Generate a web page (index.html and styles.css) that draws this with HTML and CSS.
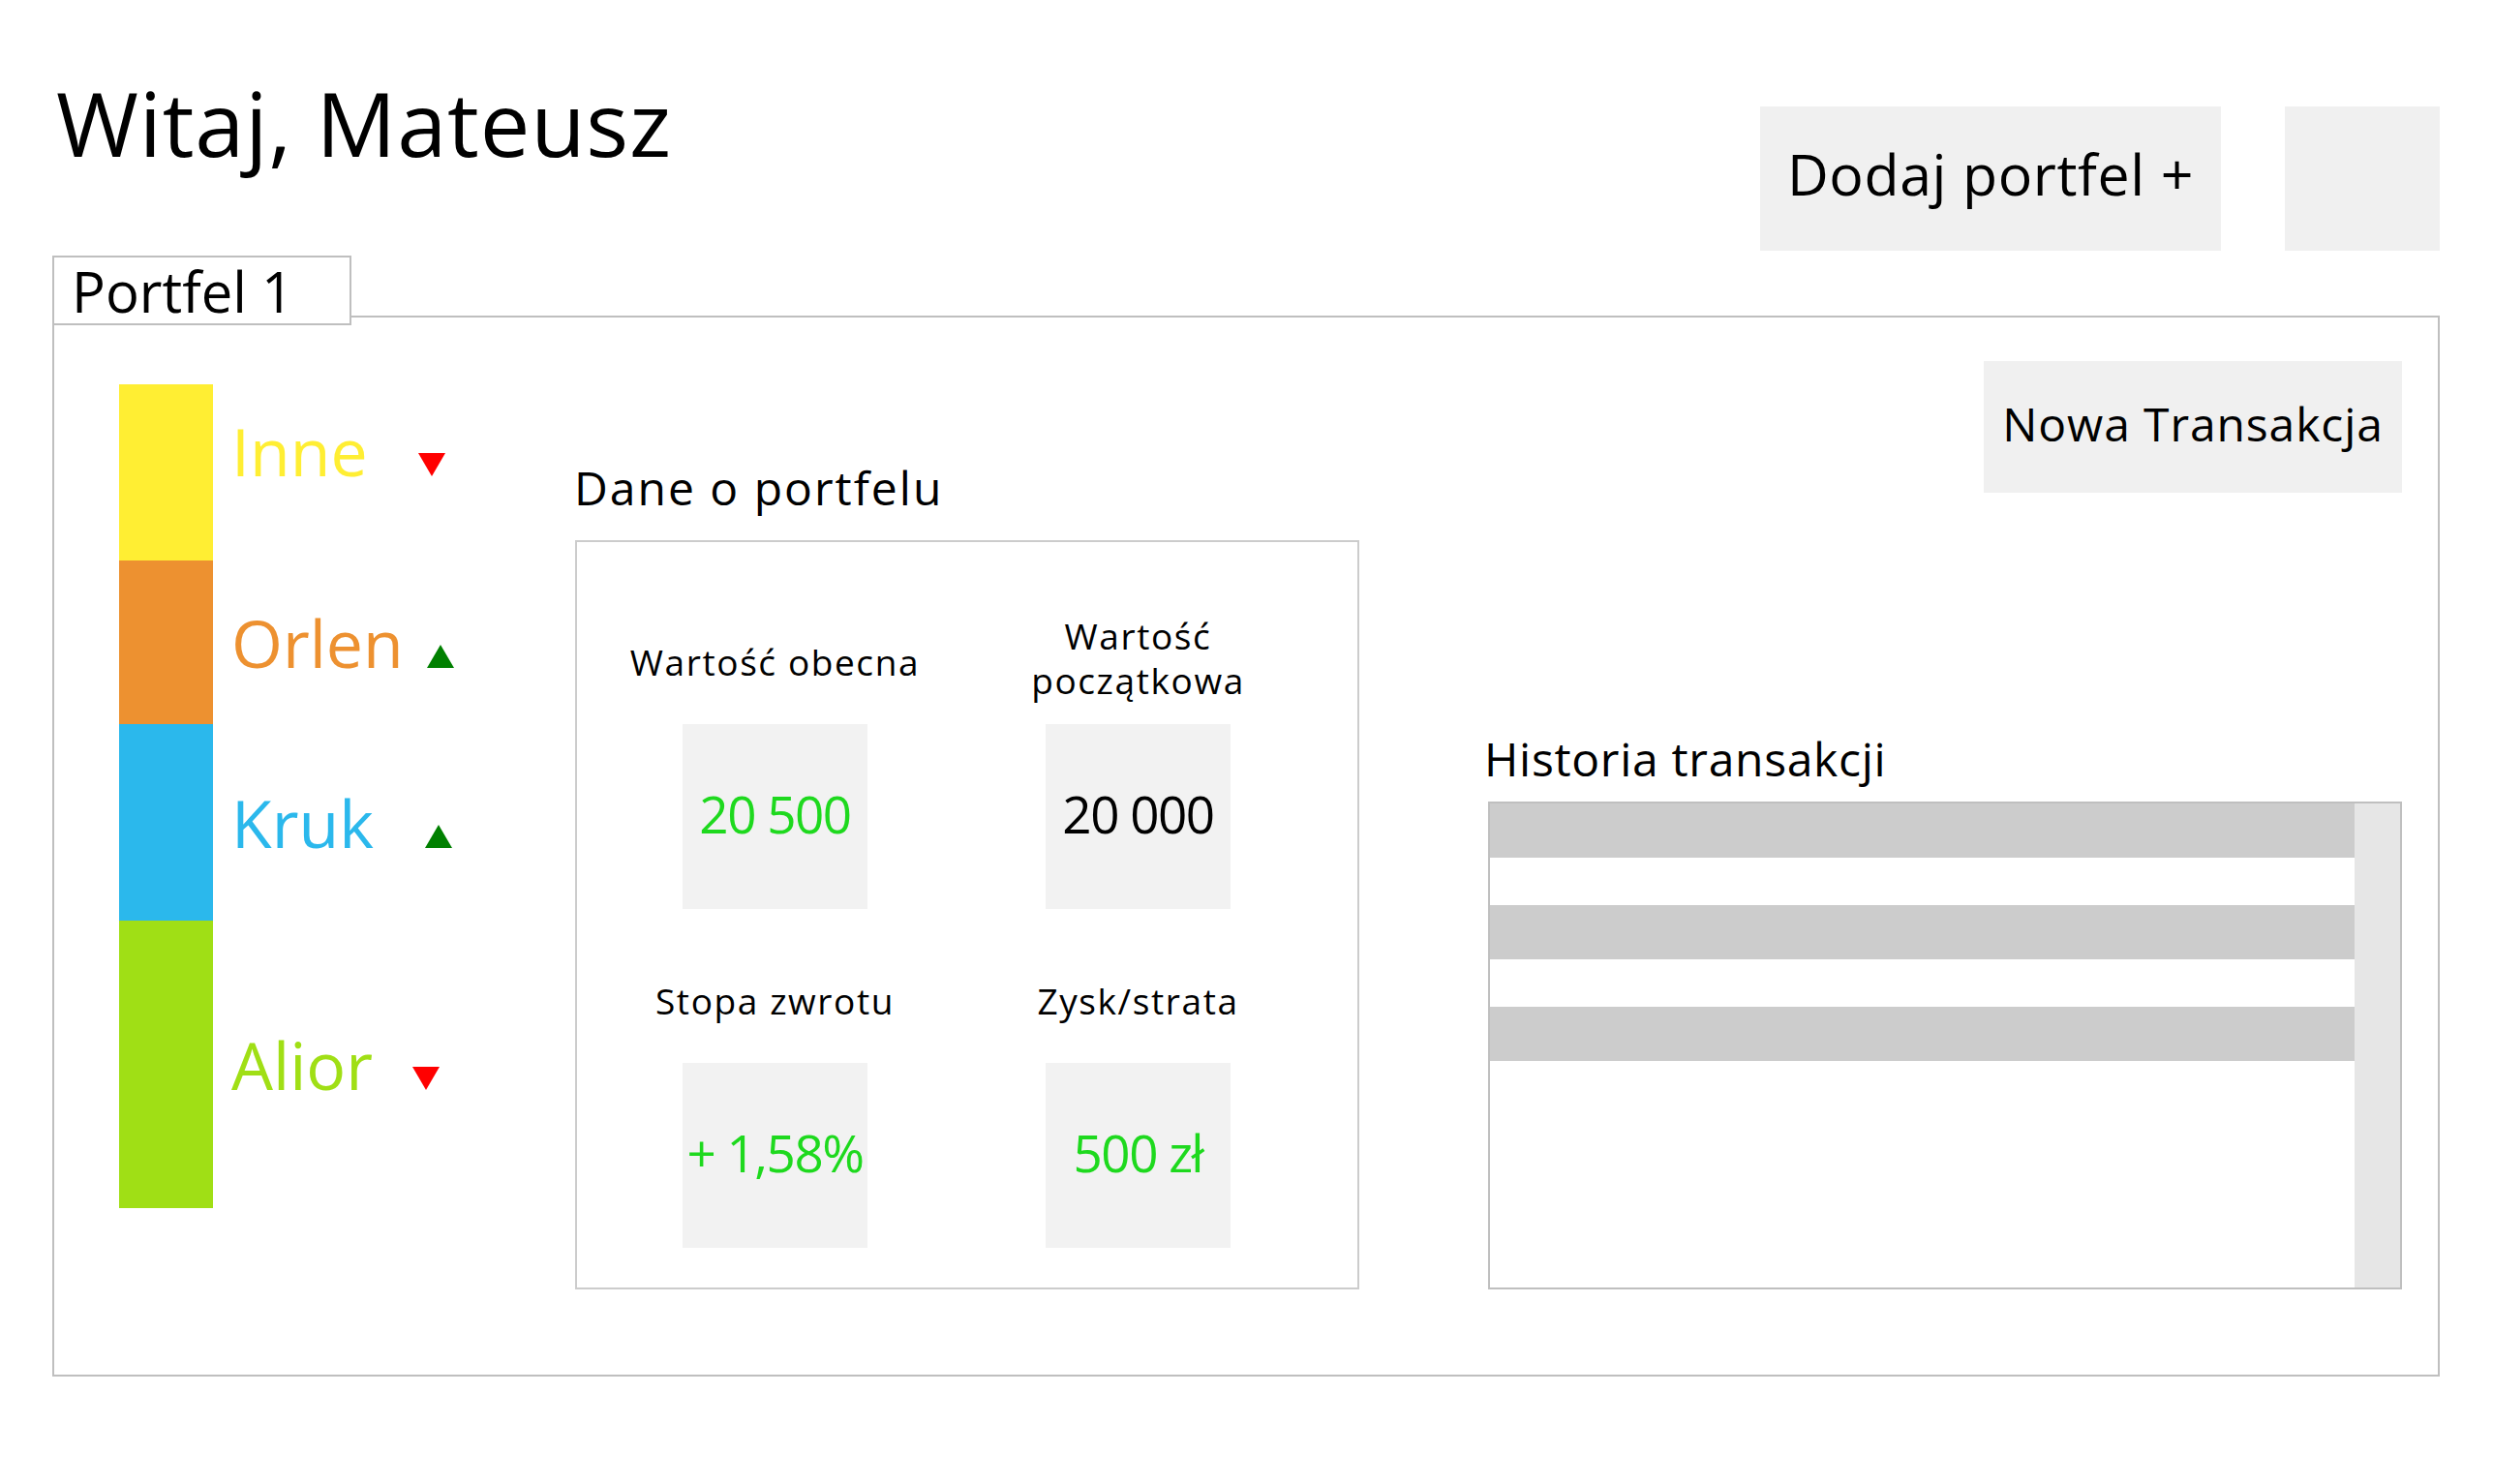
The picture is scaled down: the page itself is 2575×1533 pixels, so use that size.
FILE: index.html
```html
<!DOCTYPE html>
<html lang="pl">
<head>
<meta charset="utf-8">
<title>Portfel</title>
<link rel="stylesheet" href="styles.css">
</head>
<body>
<div class="page">
  <header class="top">
    <h1 class="greeting">Witaj, Mateusz</h1>
    <div class="top-actions">
      <button class="btn btn-add">Dodaj portfel +</button>
      <button class="btn btn-square" aria-label="Ustawienia"></button>
    </div>
  </header>

  <div class="tab">Portfel 1</div>

  <section class="panel">
    <div class="legend">
      <div class="seg seg-inne">
        <span class="swatch"></span>
        <div class="label"><span class="name">Inne</span><svg class="tri" width="28" height="24" viewBox="0 0 28 24"><polygon points="0,0 28,0 14,24" fill="#ff0000"/></svg></div>
      </div>
      <div class="seg seg-orlen">
        <span class="swatch"></span>
        <div class="label"><span class="name">Orlen</span><svg class="tri" width="28" height="24" viewBox="0 0 28 24"><polygon points="0,24 28,24 14,0" fill="#008000"/></svg></div>
      </div>
      <div class="seg seg-kruk">
        <span class="swatch"></span>
        <div class="label"><span class="name">Kruk</span><svg class="tri" width="28" height="24" viewBox="0 0 28 24"><polygon points="0,24 28,24 14,0" fill="#008000"/></svg></div>
      </div>
      <div class="seg seg-alior">
        <span class="swatch"></span>
        <div class="label"><span class="name">Alior</span><svg class="tri" width="28" height="24" viewBox="0 0 28 24"><polygon points="0,0 28,0 14,24" fill="#ff0000"/></svg></div>
      </div>
    </div>

    <div class="data">
      <h2 class="section-title title-data">Dane o portfelu</h2>
      <div class="data-box">
        <div class="stat">
          <div class="stat-label">Wartość obecna</div>
          <div class="stat-tile pos">20 500</div>
        </div>
        <div class="stat">
          <div class="stat-label stat-label-two">Wartość<br>początkowa</div>
          <div class="stat-tile">20 000</div>
        </div>
        <div class="stat">
          <div class="stat-label">Stopa zwrotu</div>
          <div class="stat-tile pos">+ 1,58%</div>
        </div>
        <div class="stat">
          <div class="stat-label">Zysk/strata</div>
          <div class="stat-tile pos">500 zł</div>
        </div>
      </div>
    </div>

    <div class="side">
      <button class="btn btn-new">Nowa Transakcja</button>
      <h2 class="section-title title-history">Historia transakcji</h2>
      <div class="history">
        <div class="history-list">
          <div class="history-row"></div>
          <div class="history-row"></div>
          <div class="history-row"></div>
        </div>
        <div class="scrollbar"></div>
      </div>
    </div>
  </section>
</div>
</body>
</html>
```

FILE: styles.css
```css
* {
  box-sizing: border-box;
}

html, body {
  margin: 0;
  padding: 0;
  background: #ffffff;
}

body {
  font-family: "Open Sans", "DejaVu Sans", sans-serif;
  color: #000000;
}

.page {
  padding: 0 55px 0 54px;
}

/* Header */
.top {
  display: flex;
  align-items: flex-start;
  height: 264px;
}

.greeting {
  margin: 81px 0 0 4px;
  font-size: 92px;
  font-weight: 400;
  line-height: 1;
  letter-spacing: 0.8px;
}

.top-actions {
  margin-left: auto;
  margin-top: 110px;
  display: flex;
  gap: 66px;
}

.btn {
  border: none;
  margin: 0;
  padding: 0;
  background: #f0f0f0;
  font-family: inherit;
  color: #000000;
  font-weight: 400;
  line-height: 1;
  display: flex;
  align-items: center;
  justify-content: center;
}

.btn-add {
  width: 476px;
  height: 149px;
  padding-bottom: 10px;
  font-size: 59px;
  letter-spacing: 0.6px;
}

.btn-square {
  width: 160px;
  height: 149px;
}

/* Tab + panel */
.tab {
  position: relative;
  z-index: 1;
  width: 309px;
  height: 72px;
  margin-bottom: -10px;
  border: 2px solid #bfbfbf;
  background: #ffffff;
  padding: 6px 0 0 18px;
  font-size: 58px;
  line-height: 1;
}

.panel {
  display: flex;
  align-items: flex-start;
  height: 1096px;
  border: 2px solid #bfbfbf;
  padding: 0 37px 0 67px;
}

/* Legend */
.legend {
  flex: none;
  width: 350px;
  margin-top: 69px;
  display: flex;
  flex-direction: column;
}

.seg {
  display: flex;
  align-items: center;
}

.swatch {
  align-self: stretch;
  width: 97px;
  flex: none;
}

.label {
  margin-left: 19px;
  font-size: 68px;
  line-height: 1;
  white-space: nowrap;
}

.name {
  display: inline-block;
  width: 193px;
}

.tri {
  vertical-align: baseline;
}

.seg-inne { height: 182px; }
.seg-orlen { height: 169px; }
.seg-kruk { height: 203px; }
.seg-alior { height: 297px; }

.seg-inne .swatch { background: #ffee33; }
.seg-orlen .swatch { background: #ed9130; }
.seg-kruk .swatch { background: #2bb8ec; }
.seg-alior .swatch { background: #a0df15; }

.seg-inne .label { color: #ffee33; padding-bottom: 44px; }
.seg-orlen .label { color: #ed9130; }
.seg-kruk .label { color: #2bb8ec; }
.seg-alior .label { color: #a0df15; }

.seg-orlen .tri { margin-left: 9px; }
.seg-kruk .tri { margin-left: 7px; }
.seg-alior .tri { margin-left: -6px; }

/* Section titles */
.section-title {
  margin: 0;
  font-size: 48px;
  font-weight: 400;
  line-height: 1;
}

/* Data column */
.data {
  flex: none;
  width: 810px;
  margin-left: 121px;
}

.title-data {
  margin: 152px 0 30px -1px;
  letter-spacing: 2px;
}

.data-box {
  height: 774px;
  border: 2px solid #cccccc;
  padding: 60px 0 0 17px;
  display: grid;
  grid-template-columns: 375px 375px;
  row-gap: 31px;
  align-content: start;
}

.stat {
  display: flex;
  flex-direction: column;
  align-items: center;
}

.stat-label {
  height: 128px;
  display: flex;
  align-items: center;
  justify-content: center;
  text-align: center;
  font-size: 37px;
  line-height: 46px;
  letter-spacing: 1.6px;
}

.stat-label-two {
  padding-bottom: 8px;
}

.stat-tile {
  width: 191px;
  height: 191px;
  padding-bottom: 6px;
  background: #f2f2f2;
  display: flex;
  align-items: center;
  justify-content: center;
  font-size: 53px;
  line-height: 1;
  letter-spacing: -1.5px;
  white-space: nowrap;
}

.stat-tile.pos {
  color: #1ed91e;
}

/* Right column */
.side {
  flex: 1;
  margin-left: 133px;
  display: flex;
  flex-direction: column;
}

.btn-new {
  align-self: flex-end;
  margin-top: 45px;
  width: 432px;
  height: 136px;
  padding-bottom: 6px;
  font-size: 48px;
  letter-spacing: 0.9px;
}

.title-history {
  margin: 251px 0 20px -4px;
  letter-spacing: 0.7px;
}

.history {
  display: flex;
  height: 504px;
  border: 2px solid #bfbfbf;
}

.history-list {
  flex: 1;
  display: flex;
  flex-direction: column;
  gap: 49px;
}

.history-row {
  height: 56px;
  background: #cccccc;
}

.scrollbar {
  width: 47px;
  background: #e6e6e6;
}
```
